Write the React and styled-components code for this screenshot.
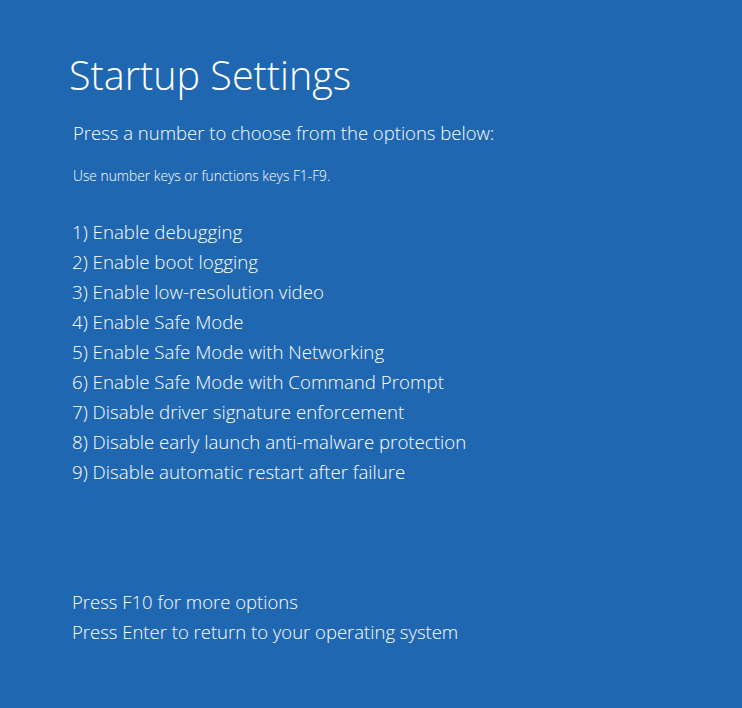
import React from 'react';
import styled, { createGlobalStyle } from 'styled-components';

const GlobalStyle = createGlobalStyle`
  html, body {
    margin: 0;
    padding: 0;
    background: #2067B2;
  }
`;

const Screen = styled.div`
  width: 742px;
  height: 708px;
  background: #2067B2;
  color: #FFFFFF;
  font-family: "Open Sans", "Noto Sans", sans-serif;
  padding: 50px 0 0 72px;
  box-sizing: border-box;
  display: flex;
  flex-direction: column;
`;

const Title = styled.h1`
  margin: 0 0 0 -3px;
  font-weight: 300;
  font-size: 39.5px;
  line-height: 50px;
`;

const Prompt = styled.p`
  margin: 20px 0 0 1px;
  font-size: 18.5px;
  font-weight: 300;
  line-height: 26px;
`;

const Hint = styled.p`
  margin: 21px 0 0 1px;
  font-size: 13.8px;
  font-weight: 300;
  line-height: 18px;
`;

const Options = styled.ol`
  list-style: none;
  margin: 32px 0 0 0;
  padding: 0;
`;

const Option = styled.li`
  font-size: 18.7px;
  font-weight: 300;
  line-height: 30px;
`;

const Footer = styled.div`
  margin-top: 100px;
`;

const FooterLine = styled.div`
  font-size: 18.5px;
  font-weight: 300;
  line-height: 30px;
`;

const options = [
  'Enable debugging',
  'Enable boot logging',
  'Enable low-resolution video',
  'Enable Safe Mode',
  'Enable Safe Mode with Networking',
  'Enable Safe Mode with Command Prompt',
  'Disable driver signature enforcement',
  'Disable early launch anti-malware protection',
  'Disable automatic restart after failure',
];

export default function App() {
  return (
    <>
      <GlobalStyle />
      <Screen>
        <Title>Startup Settings</Title>
        <Prompt>Press a number to choose from the options below:</Prompt>
        <Hint>Use number keys or functions keys F1-F9.</Hint>
        <Options>
          {options.map((text, i) => (
            <Option key={text}>{i + 1}) {text}</Option>
          ))}
        </Options>
        <Footer>
          <FooterLine>Press F10 for more options</FooterLine>
          <FooterLine>Press Enter to return to your operating system</FooterLine>
        </Footer>
      </Screen>
    </>
  );
}
